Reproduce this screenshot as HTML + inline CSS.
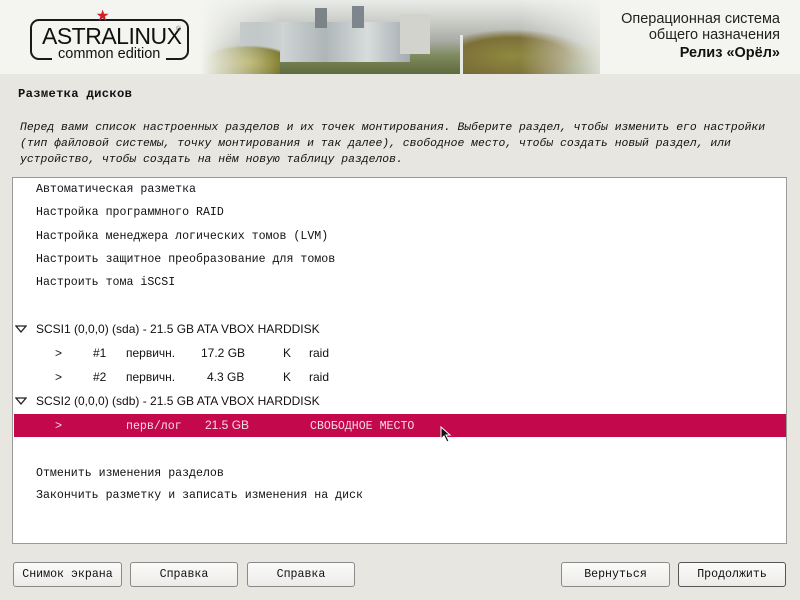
<!DOCTYPE html>
<html><head><meta charset="utf-8"><style>
*{margin:0;padding:0;box-sizing:border-box}
body{width:800px;height:600px;background:#e8e6e1;position:relative;overflow:hidden;font-family:"Liberation Mono","DejaVu Sans Mono",monospace;color:#111}
#hdr{position:absolute;left:0;top:0;width:800px;height:74px;background:#f4f5f1;overflow:hidden}
.ab{position:absolute}
.m{font-size:11.6px;white-space:pre}
.s{font-family:"Liberation Sans",sans-serif;font-size:12px;white-space:pre}
.btn{position:absolute;top:562px;height:25px;border:1px solid #8a8a88;border-radius:3px;background:linear-gradient(#fbfbfa,#ecebe8);font-size:11.6px;text-align:center;line-height:23px}
</style></head><body>
<div id="hdr">
 <div class="ab" style="left:200px;top:0;width:400px;height:74px;background:linear-gradient(180deg,#e9ece8 0%,#c9ccc6 30%,#a9aca6 55%,#7f8a5e 75%,#5e6b3c 100%)"></div>
 <div class="ab" style="left:240px;top:22px;width:170px;height:40px;background:linear-gradient(90deg,#9aa2a8,#cfd4d4,#aeb6b8,#d8dcdc,#a3abb0)"></div>
 <div class="ab" style="left:315px;top:8px;width:12px;height:20px;background:#7d8489"></div>
 <div class="ab" style="left:352px;top:6px;width:12px;height:22px;background:#7d868c"></div>
 <div class="ab" style="left:400px;top:14px;width:30px;height:40px;background:#d3d3cd"></div>
 <div class="ab" style="left:200px;top:45px;width:80px;height:29px;background:radial-gradient(ellipse at 60% 60%,#a59a3a,#7a7a30 60%,transparent 70%)"></div>
 <div class="ab" style="left:460px;top:30px;width:130px;height:44px;background:radial-gradient(ellipse at 40% 60%,#8d8a40,#7d7038 50%,transparent 72%)"></div>
 <div class="ab" style="left:460px;top:35px;width:3px;height:39px;background:#e8e8e4"></div>
 <div class="ab" style="left:200px;top:0;width:80px;height:74px;background:linear-gradient(90deg,#f4f5f1,rgba(244,245,241,0))"></div>
 <div class="ab" style="left:520px;top:0;width:280px;height:74px;background:linear-gradient(90deg,rgba(244,245,241,0),#f4f5f1 35%)"></div>
 <div class="ab" style="left:30px;top:19px;width:159px;height:41px;border:2px solid #1a1a1a;border-radius:9px"></div>
 <div class="ab" style="left:52px;top:51px;width:114px;height:12px;background:#f4f5f1"></div>
 <div class="ab" style="left:96px;top:5px;font-size:22px;color:#d0202a;line-height:22px">★</div>
 <div class="ab" style="left:42px;top:23px;font-family:'Liberation Sans',sans-serif;font-size:23px;line-height:26px;letter-spacing:-0.5px;color:#111">ASTRALINUX</div>
 <div class="ab" style="left:176px;top:26px;font-family:'Liberation Sans',sans-serif;font-size:7px;color:#777">®</div>
 <div class="ab" style="left:58px;top:46px;font-family:'Liberation Sans',sans-serif;font-size:14.5px;line-height:16px;color:#111">common edition</div>
 <div class="ab" style="right:20px;top:11px;font-family:'Liberation Sans',sans-serif;font-size:14.5px;line-height:16px;text-align:right;color:#222">Операционная система<br>общего назначения</div>
 <div class="ab" style="right:20px;top:45px;font-family:'Liberation Sans',sans-serif;font-size:14.5px;font-weight:bold;color:#111">Релиз «Орёл»</div>
</div>
<div class="ab m" style="left:18px;top:87px;font-size:12.2px;font-weight:bold;letter-spacing:0.3px">Разметка дисков</div>
<div class="ab m" style="left:20px;top:120px;font-style:italic;font-size:11.4px;line-height:16px">Перед вами список настроенных разделов и их точек монтирования. Выберите раздел, чтобы изменить его настройки
(тип файловой системы, точку монтирования и так далее), свободное место, чтобы создать новый раздел, или
устройство, чтобы создать на нём новую таблицу разделов.</div>
<div class="ab" style="left:12px;top:177px;width:775px;height:367px;background:#fff;border:1px solid #9a9a96"></div>
<div class="ab m" style="left:36px;top:183px">Автоматическая разметка</div>
<div class="ab m" style="left:36px;top:206px">Настройка программного RAID</div>
<div class="ab m" style="left:36px;top:230px">Настройка менеджера логических томов (LVM)</div>
<div class="ab m" style="left:36px;top:253px">Настроить защитное преобразование для томов</div>
<div class="ab m" style="left:36px;top:276px">Настроить тома iSCSI</div>
<svg class="ab" style="left:15px;top:325px" width="12" height="8"><path d="M1 1 L11 1 L6 7 Z" fill="none" stroke="#222" stroke-width="1.3"/></svg>
<div class="ab s" style="left:36px;top:322px">SCSI1 (0,0,0) (sda) - 21.5 GB ATA VBOX HARDDISK</div>
<div class="ab s" style="left:55px;top:346px">&gt;</div><div class="ab s" style="left:93px;top:346px">#1</div><div class="ab s" style="left:126px;top:346px">первичн.</div><div class="ab s" style="left:201px;top:346px">17.2 GB</div><div class="ab s" style="left:283px;top:346px">K</div><div class="ab s" style="left:309px;top:346px">raid</div>
<div class="ab s" style="left:55px;top:370px">&gt;</div><div class="ab s" style="left:93px;top:370px">#2</div><div class="ab s" style="left:126px;top:370px">первичн.</div><div class="ab s" style="left:207px;top:370px">4.3 GB</div><div class="ab s" style="left:283px;top:370px">K</div><div class="ab s" style="left:309px;top:370px">raid</div>
<svg class="ab" style="left:15px;top:397px" width="12" height="8"><path d="M1 1 L11 1 L6 7 Z" fill="none" stroke="#222" stroke-width="1.3"/></svg>
<div class="ab s" style="left:36px;top:394px">SCSI2 (0,0,0) (sdb) - 21.5 GB ATA VBOX HARDDISK</div>
<div class="ab" style="left:14px;top:414px;width:772px;height:23px;background:#c3084b"></div>
<div class="ab s" style="left:55px;top:418px;color:#f6dbe4">&gt;</div><div class="ab m" style="left:126px;top:420px;color:#f6dbe4">перв/лог</div><div class="ab s" style="left:205px;top:418px;color:#f6dbe4">21.5 GB</div><div class="ab m" style="left:310px;top:420px;color:#f6dbe4">СВОБОДНОЕ МЕСТО</div>
<svg class="ab" style="left:440px;top:426px" width="12" height="17" viewBox="0 0 12 17"><path d="M1 1 L1 13 L4 10 L7 16 L9 15 L6 9 L10 9 Z" fill="#111" stroke="#fff" stroke-width="1"/></svg>
<div class="ab m" style="left:36px;top:467px">Отменить изменения разделов</div>
<div class="ab m" style="left:36px;top:489px">Закончить разметку и записать изменения на диск</div>
<div class="btn" style="left:13px;width:109px">Снимок экрана</div>
<div class="btn" style="left:130px;width:108px">Справка</div>
<div class="btn" style="left:247px;width:108px">Справка</div>
<div class="btn" style="left:561px;width:109px">Вернуться</div>
<div class="btn" style="left:678px;width:108px;border-color:#555">Продолжить</div>
</body></html>
